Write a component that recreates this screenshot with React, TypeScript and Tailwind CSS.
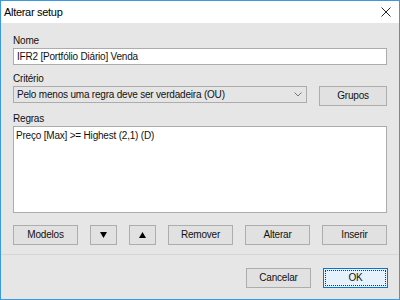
import React from "react";

const font = { fontFamily: '"Liberation Sans", Arial, sans-serif', letterSpacing: "-0.2px" };

function Btn({ w, children, className = "" }: { w: string; children: React.ReactNode; className?: string }) {
  return (
    <div
      className={`${w} h-[20px] flex items-center justify-center border border-[#adadad] bg-[#e1e1e1] text-[10px] text-[#111] leading-none ${className}`}
    >
      {children}
    </div>
  );
}

export default function App() {
  return (
    <div
      className="w-[400px] h-[300px] border border-[#3b99e0] flex flex-col bg-[#e6e6e6] overflow-hidden"
      style={font}
    >
      <div className="h-[22px] bg-white flex items-center justify-between pl-[3px] pr-[8px] shrink-0">
        <span className="text-[11px] text-black leading-none tracking-[-0.3px]">Alterar setup</span>
        <svg width="10" height="10" viewBox="0 0 10 10">
          <path d="M0.5 0.5 L9.5 9.5 M9.5 0.5 L0.5 9.5" stroke="#222" strokeWidth="1" />
        </svg>
      </div>
      <div className="flex-1 flex flex-col px-[12px] pt-[10px]">
        <div className="h-[15px] text-[10px] leading-[15px] text-[#111]">Nome</div>
        <div className="h-[17px] border border-[#acacac] bg-white flex items-center pl-[3px] text-[10px] leading-none text-[#111]">
          IFR2 [Portfólio Diário] Venda
        </div>
        <div className="mt-[6px] h-[15px] text-[10px] leading-[15px] text-[#111]">Critério</div>
        <div className="flex gap-[12px]">
          <div className="w-[294px] h-[17px] border border-[#acacac] bg-[#e5e5e5] flex items-center justify-between pl-[3px] pr-[4px] text-[10px] leading-none text-[#111]">
            <span>Pelo menos uma regra deve ser verdadeira (OU)</span>
            <svg width="8" height="5" viewBox="0 0 8 5">
              <path d="M0.5 0.5 L4 4 L7.5 0.5" stroke="#777" strokeWidth="1" fill="none" />
            </svg>
          </div>
          <Btn w="w-[68px]" className="h-[17px]">Grupos</Btn>
        </div>
        <div className="mt-[5px] h-[15px] text-[10px] leading-[15px] text-[#111]">Regras</div>
        <div className="h-[87px] border border-[#acacac] bg-white pl-[2px] pt-[1px] text-[10px] leading-[15px] text-[#111]">
          Preço [Max] &gt;= Highest (2,1) (D)
        </div>
        <div className="mt-[12px] flex">
          <Btn w="w-[65px]">Modelos</Btn>
          <Btn w="w-[27px]" className="ml-[12px]">
            <svg width="7" height="6" viewBox="0 0 7 6"><path d="M0 0 H7 L3.5 6 Z" fill="#000" /></svg>
          </Btn>
          <Btn w="w-[27px]" className="ml-[12px]">
            <svg width="7" height="6" viewBox="0 0 7 6"><path d="M0 6 H7 L3.5 0 Z" fill="#000" /></svg>
          </Btn>
          <Btn w="w-[65px]" className="ml-[12px]">Remover</Btn>
          <Btn w="w-[65px]" className="ml-[12px]">Alterar</Btn>
          <Btn w="w-[65px]" className="ml-[12px]">Inserir</Btn>
        </div>
      </div>
      <div className="h-[45px] shrink-0 border-t border-[#d6d6d6] flex justify-end items-start pt-[13px] pr-[11px] gap-[12px]">
        <Btn w="w-[65px]">Cancelar</Btn>
        <div className="w-[65px] h-[20px] border border-[#0078d7] bg-[#e5f1fb] p-[1px]">
          <div className="w-full h-full border border-dotted border-[#333] flex items-center justify-center text-[10px] leading-none text-[#111]">
            OK
          </div>
        </div>
      </div>
    </div>
  );
}
